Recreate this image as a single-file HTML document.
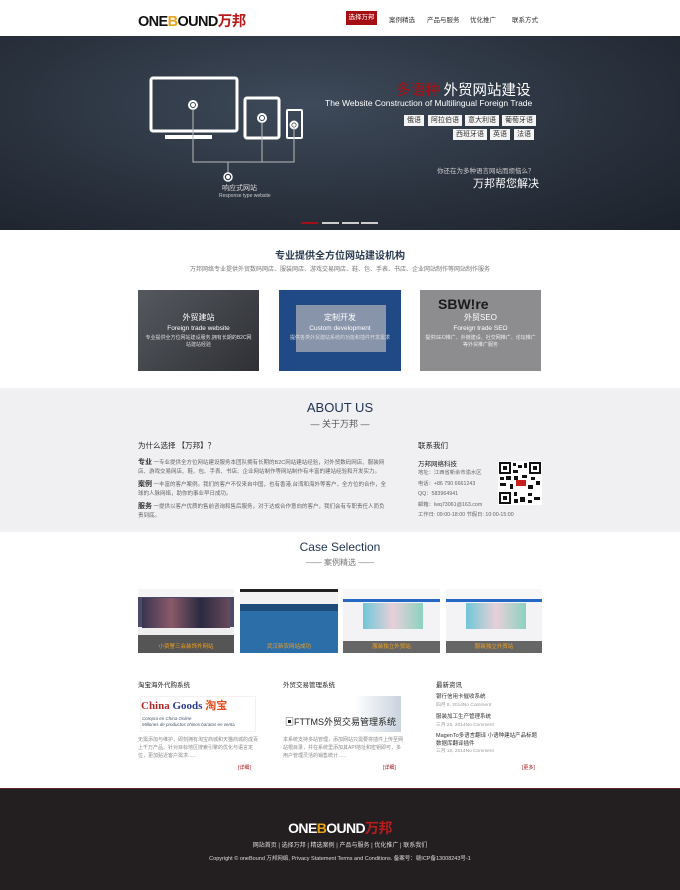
<!DOCTYPE html>
<html><head><meta charset="utf-8"><style>
*{margin:0;padding:0;box-sizing:border-box}
body{width:680px;height:890px;overflow:hidden;font-family:"Liberation Sans","Noto Sans CJK SC",sans-serif;background:#fff;color:#333;position:relative}
.a{position:absolute}
.logo{font-weight:bold;letter-spacing:-0.6px;white-space:nowrap}
.nav{font-size:6.5px;color:#333}
.tag{background:#f4f4f4;color:#333;font-size:7px;padding:1px 3px;line-height:9px}
.c{text-align:center}
.small{font-size:5.5px;color:#666;line-height:9px}
</style></head><body>
<!-- header -->
<div class="a logo" style="left:138px;top:10px;font-size:14.5px;color:#111">ONE<span style="color:#e8a21a">B</span>OUND<span style="color:#b81c1c">万邦</span></div>
<div class="a nav" style="left:346px;top:11px;width:31px;height:14px;background:#a50e12;color:#fff;text-align:center;line-height:14px">选择万邦</div>
<div class="a nav" style="left:389px;top:14px">案例精选</div>
<div class="a nav" style="left:427px;top:14px">产品与服务</div>
<div class="a nav" style="left:470px;top:14px">优化推广</div>
<div class="a nav" style="left:512px;top:14px">联系方式</div>
<!-- banner -->
<div class="a" style="left:0;top:36px;width:680px;height:194px;background:radial-gradient(ellipse at 45% 35%,#3e4a5a 0%,#2a323e 55%,#1c222b 100%)"></div>
<svg class="a" style="left:145px;top:70px" width="170" height="130" viewBox="0 0 170 130" fill="none" stroke="#fff">
<rect x="6" y="8" width="86" height="53" rx="2" stroke-width="3"/>
<rect x="20" y="65" width="47" height="4" fill="#fff" stroke="none"/>
<rect x="100" y="28" width="34" height="40" rx="2" stroke-width="3"/>
<rect x="142" y="40" width="15" height="28" rx="1" stroke-width="2"/>
<circle cx="48" cy="35" r="4" stroke-width="2"/><circle cx="48" cy="35" r="1.5" fill="#fff"/>
<circle cx="117" cy="48" r="4" stroke-width="2"/><circle cx="117" cy="48" r="1.5" fill="#fff"/>
<circle cx="149" cy="55" r="3.5" stroke-width="2"/><circle cx="149" cy="55" r="1.3" fill="#fff"/>
<path d="M48 39V92H149V58M117 52V92M83 92V103" stroke="#bbb" stroke-width="1"/>
<circle cx="83" cy="107" r="4" stroke-width="1.5"/><circle cx="83" cy="107" r="1.5" fill="#fff"/>
</svg>
<div class="a" style="left:222px;top:183px;font-size:7px;color:#ddd">响应式网站</div>
<div class="a" style="left:219px;top:193px;font-size:5px;color:#ccc">Response type website</div>
<div class="a" style="left:396px;top:79px;font-size:14.5px;color:#fff;white-space:nowrap"><span style="color:#a80f14">多语种</span> 外贸网站建设</div>
<div class="a" style="left:325px;top:98px;font-size:8.5px;color:#fff;white-space:nowrap">The Website Construction of Multilingual Foreign Trade</div>
<div class="a tag" style="left:404px;top:115px">俄语</div>
<div class="a tag" style="left:428px;top:115px">阿拉伯语</div>
<div class="a tag" style="left:465px;top:115px">意大利语</div>
<div class="a tag" style="left:502px;top:115px">葡萄牙语</div>
<div class="a tag" style="left:453px;top:129px">西班牙语</div>
<div class="a tag" style="left:490px;top:129px">英语</div>
<div class="a tag" style="left:514px;top:129px">法语</div>
<div class="a" style="left:437px;top:165px;font-size:6.5px;color:#ccc;white-space:nowrap">你还在为多种语言网站而烦恼么？</div>
<div class="a" style="left:473px;top:175px;font-size:11px;color:#fff;white-space:nowrap">万邦帮您解决</div>
<div class="a" style="left:301px;top:222px;width:17px;height:2px;background:#a50e12"></div>
<div class="a" style="left:322px;top:222px;width:17px;height:2px;background:#ccc"></div>
<div class="a" style="left:342px;top:222px;width:17px;height:2px;background:#ccc"></div>
<div class="a" style="left:361px;top:222px;width:17px;height:2px;background:#ccc"></div>
<!-- services -->
<div class="a c" style="left:0;top:247px;width:680px;font-size:10px;font-weight:bold;color:#2a3a50">专业提供全方位网站建设机构</div>
<div class="a c" style="left:0;top:264px;width:680px;font-size:6px;color:#777">万邦网络专业提供外贸数码网店、服装网店、游戏交易网店、鞋、包、手表、书店、企业网站制作等网站制作服务</div>
<div class="a" style="left:138px;top:290px;width:121px;height:81px;background:linear-gradient(135deg,#55585e,#2e3035)"></div>
<div class="a" style="left:279px;top:290px;width:122px;height:81px;background:#1f4a86"></div>
<div class="a" style="left:296px;top:305px;width:90px;height:47px;background:rgba(180,180,185,.7)"></div>
<div class="a" style="left:420px;top:290px;width:121px;height:81px;background:#8d8d8f"></div>
<div class="a" style="left:438px;top:296px;font-size:14px;font-weight:bold;color:#1a1a1a">SBW!re</div>
<div class="a c" style="left:138px;top:312px;width:121px;color:#fff;font-size:8px">外贸建站<br><span style="font-size:6.5px">Foreign trade website</span></div>
<div class="a c" style="left:279px;top:312px;width:122px;color:#fff;font-size:8px">定制开发<br><span style="font-size:6.5px">Custom development</span></div>
<div class="a c" style="left:420px;top:312px;width:121px;color:#fff;font-size:8px">外贸SEO<br><span style="font-size:6.5px">Foreign trade SEO</span></div>
<div class="a c" style="left:143px;top:335px;width:111px;color:#ddd;font-size:5px;line-height:7px">专业提供全方位网站建设服务,拥有长期的B2C网站建站经验</div>
<div class="a c" style="left:290px;top:335px;width:100px;color:#ddd;font-size:5px;line-height:7px">提供各类外贸建站系统的功能和插件开发需求</div>
<div class="a c" style="left:425px;top:335px;width:111px;color:#eee;font-size:5px;line-height:7px">提供SEO推广、外链建设、社交网推广、论坛推广等外贸推广服务</div>
<!-- about -->
<div class="a" style="left:0;top:388px;width:680px;height:144px;background:#f0eff1"></div>
<div class="a c" style="left:0;top:400px;width:680px;font-size:13px;color:#1f3350">ABOUT US</div>
<div class="a c" style="left:0;top:417px;width:680px;font-size:9px;color:#555">— 关于万邦 —</div>
<div class="a" style="left:138px;top:440px;font-size:7.5px;color:#222">为什么选择 【万邦】？</div>
<div class="a small" style="left:138px;top:458px;width:250px"><b style="font-size:7px;color:#333">专业</b> 一专业提供全方位网站建设服务本团队拥有长期的B2C网站建站经验，对外贸数码网店、服装网店、游戏交易网店、鞋、包、手表、书店、企业网站制作等网站制作有丰富的建站经验和开发实力。</div>
<div class="a small" style="left:138px;top:480px;width:250px"><b style="font-size:7px;color:#333">案例</b> 一丰富的客户案例。我们的客户不仅来自中国，也有香港,台湾和海外等客户，全方位的合作，全球的人脉网络，助你的事业早日成功。</div>
<div class="a small" style="left:138px;top:502px;width:250px"><b style="font-size:7px;color:#333">服务</b> 一提供以客户优质的售前咨询和售后服务，对于达成合作意向的客户，我们会有专职责任人而负责到底。</div>
<div class="a" style="left:418px;top:440px;font-size:7.5px;color:#222">联系我们</div>
<div class="a" style="left:418px;top:458px;font-size:6.5px;color:#222">万邦网络科技</div>
<div class="a small" style="left:418px;top:468px;line-height:10.5px;font-size:5.3px">地址：江西省新余市渝水区<br>电话：+86 790 6661243<br>QQ：583964941<br>邮箱：lwq73061@163.com<br>工作日: 09:00-18:00 节假日: 10:00-15:00</div>
<svg class="a" style="left:498px;top:461px" width="44" height="44" viewBox="0 0 44 44"><rect width="44" height="44" fill="#fff"/><g fill="#111"><rect x="1" y="1" width="12" height="12"/><rect x="31" y="1" width="12" height="12"/><rect x="1" y="31" width="12" height="12"/></g><g fill="#fff"><rect x="3" y="3" width="8" height="8"/><rect x="33" y="3" width="8" height="8"/><rect x="3" y="33" width="8" height="8"/></g><g fill="#111"><rect x="5" y="5" width="4" height="4"/><rect x="35" y="5" width="4" height="4"/><rect x="5" y="35" width="4" height="4"/><path d="M15 2h3v3h-3zM20 4h4v3h-4zM26 2h3v5h-3zM15 9h5v3h-5zM2 16h4v3H2zM8 15h5v4H8zM16 15h4v4h-4zM24 14h5v3h-5zM33 16h4v3h-4zM38 20h4v4h-4zM2 22h6v3H2zM12 23h3v5h-3zM30 24h5v4h-5zM16 31h3v4h-3zM22 36h5v5h-5zM30 32h4v3h-4zM36 36h6v3h-6zM16 38h4v4h-4zM30 39h4v3h-4z"/></g><rect x="18" y="19" width="10" height="6" fill="#c82020"/></svg>
<!-- case selection -->
<div class="a c" style="left:0;top:540px;width:680px;font-size:12px;color:#1f3350">Case Selection</div>
<div class="a c" style="left:0;top:557px;width:680px;font-size:8px;color:#777">—— 案例精选 ——</div>
<div class="a" style="left:138px;top:589px;width:96px;height:64px;background:linear-gradient(#f5f5f5 0 8px,#4a4a6a 8px 38px,#eee 38px 46px,#555 46px)"></div>
<div class="a" style="left:240px;top:589px;width:98px;height:64px;background:linear-gradient(#222 0 3px,#f2f2f2 3px 15px,#1e4c7a 15px 22px,#2c6ea8 22px)"></div>
<div class="a" style="left:343px;top:589px;width:97px;height:64px;background:linear-gradient(#f7f7f7 0 10px,#2468c4 10px 13px,#f3f3f6 13px 52px,#666 52px)"></div>
<div class="a" style="left:446px;top:589px;width:96px;height:64px;background:linear-gradient(#f7f7f7 0 10px,#2468c4 10px 13px,#f3f3f6 13px 52px,#666 52px)"></div>
<div class="a" style="left:363px;top:603px;width:60px;height:26px;background:linear-gradient(90deg,#6fc7d8,#e8d0d8,#8bd2c0)"></div>
<div class="a" style="left:466px;top:603px;width:60px;height:26px;background:linear-gradient(90deg,#6fc7d8,#e8d0d8,#8bd2c0)"></div>
<div class="a" style="left:142px;top:598px;width:88px;height:30px;background:linear-gradient(90deg,#3a3550,#8a5a6a,#2a2a40,#6a4a5a)"></div>
<div class="a" style="left:138px;top:642px;width:96px;font-size:5.5px;color:#f0a020;text-align:center">小资警三会装饰外网站</div>
<div class="a" style="left:240px;top:642px;width:98px;font-size:5.5px;color:#f0a020;text-align:center">武汉新农网站成功</div>
<div class="a" style="left:343px;top:642px;width:97px;font-size:5.5px;color:#f0a020;text-align:center">服装独立外贸站</div>
<div class="a" style="left:446px;top:642px;width:96px;font-size:5.5px;color:#f0a020;text-align:center">服装独立外贸站</div>
<!-- three columns -->
<div class="a" style="left:138px;top:679px;font-size:6.5px;color:#222">淘宝海外代购系统</div>
<div class="a" style="left:283px;top:679px;font-size:6.5px;color:#222">外贸交易管理系统</div>
<div class="a" style="left:436px;top:679px;font-size:6.5px;color:#222">最新资讯</div>
<div class="a" style="left:140px;top:696px;width:116px;height:36px;background:#fff;border:1px solid #f2f2f2"></div>
<div class="a" style="left:141px;top:697px;font-size:11px;font-family:'Liberation Serif',serif;font-weight:bold;color:#b32b2b;white-space:nowrap">China <span style="color:#2b3a8a">Goods</span> <span style="color:#e64a1a;font-family:'Noto Sans CJK SC',sans-serif">淘宝</span></div>
<div class="a" style="left:142px;top:716px;font-size:4.5px;color:#456;font-style:italic;line-height:6px">Compra en China Online<br>Millones de productos chinos baratos en venta</div>
<div class="a" style="left:283px;top:696px;width:118px;height:36px;background:linear-gradient(90deg,#fff 60%,#c9d3de)"></div>
<div class="a" style="left:285px;top:715px;font-size:9px;color:#222;white-space:nowrap">▣FTTMS外贸交易管理系统</div>
<div class="a small" style="left:138px;top:736px;width:122px;font-size:5px;line-height:8px;color:#888">无需添加与维护，即刻拥有淘宝商城和天猫商城的成百上千万产品。针对目标地区搜索引擎的优化与语言定位，更加贴近客户需求......</div>
<div class="a small" style="left:283px;top:736px;width:122px;font-size:5px;line-height:8px;color:#888">本系统支持多站管理，添加网站只需要将插件上传至网站根目录，并在系统里添加其API地址和密钥即可，多用户管理灵活的销售统计......</div>
<div class="a" style="left:238px;top:764px;font-size:5px;color:#a50e12">[详细]</div>
<div class="a" style="left:383px;top:764px;font-size:5px;color:#a50e12">[详细]</div>
<div class="a" style="left:522px;top:764px;font-size:5px;color:#a50e12">[更多]</div>
<div class="a" style="left:436px;top:693px;font-size:5.5px;color:#333;line-height:8px">银行信用卡催收系统<br><span style="color:#999;font-size:4.8px">四月 8, 2014No Comment</span></div>
<div class="a" style="left:436px;top:713px;font-size:5.5px;color:#333;line-height:8px">服装加工生产管理系统<br><span style="color:#999;font-size:4.8px">三月 20, 2014No Comment</span></div>
<div class="a" style="left:436px;top:733px;font-size:5.5px;color:#333;line-height:7.5px;width:106px">MagenTo多语言翻译 小语种建站产品标题数据库翻译插件<br><span style="color:#999;font-size:4.8px">三月 10, 2014No Comment</span></div>
<!-- footer -->
<div class="a" style="left:0;top:788px;width:680px;height:102px;background:#231f20;border-top:1px solid #5a2a2a"></div>
<div class="a logo c" style="left:0;top:818px;width:680px;font-size:14px;color:#fff">ONE<span style="color:#e8a21a">B</span>OUND<span style="color:#b81c1c">万邦</span></div>
<div class="a c" style="left:0;top:840px;width:680px;font-size:6px;color:#ddd">网站首页 | 选择万邦 | 精选案例 | 产品与服务 | 优化推广 | 联系我们</div>
<div class="a c" style="left:0;top:854px;width:680px;font-size:5.5px;color:#ddd">Copyright © oneBound 万邦网络, Privacy Statement Terms and Conditions. 备案号：赣ICP备13008243号-1</div>
</body></html>
